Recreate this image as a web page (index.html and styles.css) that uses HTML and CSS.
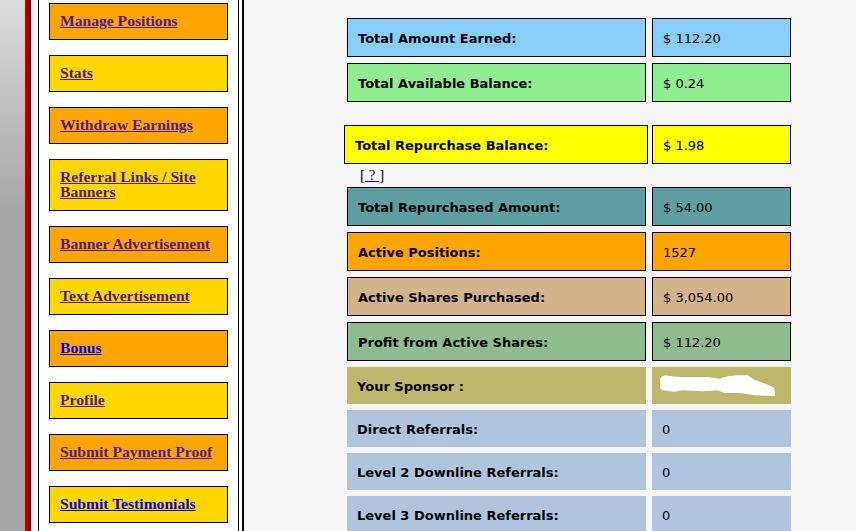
FILE: index.html
```html
<!DOCTYPE html>
<html>
<head>
<meta charset="utf-8">
<link rel="stylesheet" href="styles.css">
</head>
<body>
<div class="page">
  <div class="rail"></div>
  <div class="stripe"></div>
  <div class="pale"></div>
  <div class="side-outer">
    <div class="sidebar">
      <ul class="menu">
        <li class="item orange"><a class="visited" href="#">Manage Positions</a></li>
        <li class="item gold"><a class="visited" href="#">Stats</a></li>
        <li class="item orange"><a class="visited" href="#">Withdraw Earnings</a></li>
        <li class="item gold"><a class="visited" href="#">Referral Links / Site Banners</a></li>
        <li class="item orange"><a class="visited" href="#">Banner Advertisement</a></li>
        <li class="item gold"><a class="visited" href="#">Text Advertisement</a></li>
        <li class="item orange"><a class="fresh" href="#">Bonus</a></li>
        <li class="item gold"><a class="visited" href="#">Profile</a></li>
        <li class="item orange"><a class="visited" href="#">Submit Payment Proof</a></li>
        <li class="item gold"><a class="fresh" href="#">Submit Testimonials</a></li>
      </ul>
    </div>
  </div>
  <main class="main">
    <div class="grid grid-a">
      <div class="cell bordered sky label">Total Amount Earned:</div>
      <div class="cell bordered sky value">$ 112.20</div>
      <div class="cell bordered lgreen label">Total Available Balance:</div>
      <div class="cell bordered lgreen value">$ 0.24</div>
    </div>
    <div class="grid grid-b">
      <div class="cell bordered yellow label">Total Repurchase Balance:</div>
      <div class="cell bordered yellow value">$ 1.98</div>
    </div>
    <div class="help">[<a href="#" class="help-link">&nbsp;?&nbsp;</a>]</div>
    <div class="grid grid-a">
      <div class="cell bordered teal label">Total Repurchased Amount:</div>
      <div class="cell bordered teal value">$ 54.00</div>
      <div class="cell bordered orange label">Active Positions:</div>
      <div class="cell bordered orange value">1527</div>
      <div class="cell bordered tan label">Active Shares Purchased:</div>
      <div class="cell bordered tan value">$ 3,054.00</div>
      <div class="cell bordered seagreen label">Profit from Active Shares:</div>
      <div class="cell bordered seagreen value">$ 112.20</div>
      <div class="cell khaki label">Your Sponsor :</div>
      <div class="cell khaki value"><svg class="blob" width="120" height="25" viewBox="0 0 120 25"><path fill="#fff" d="M2 3 L6 1.3 L12 2.3 L22 3 L48.7 3 L60.3 4.7 L68.7 2.3 L78.7 1.3 L88.7 1.3 L95.3 5.7 L102 8 L110.3 11.3 L115.3 13.7 L116 22 L95.3 21.3 L82 19 L65.3 19 L58.7 16.3 L43.7 17.3 L23.7 16.3 L15.3 17.7 L3.7 16.3 L1.3 14.7 L1 4.7 Z"/></svg></div>
      <div class="cell steel label">Direct Referrals:</div>
      <div class="cell steel value">0</div>
      <div class="cell steel label">Level 2 Downline Referrals:</div>
      <div class="cell steel value">0</div>
      <div class="cell steel label">Level 3 Downline Referrals:</div>
      <div class="cell steel value">0</div>
    </div>
  </main>
</div>
</body>
</html>
```
FILE: styles.css
```css
html, body {
  margin: 0;
  padding: 0;
  height: 531px;
  overflow: hidden;
}
.page {
  display: flex;
  height: 531px;
  background: #f5f5f5;
}
.rail {
  width: 25px;
  flex: none;
  background: linear-gradient(to bottom, #dcdcdc 0px, #a6a6a6 210px, #a6a6a6 100%);
}
.stripe {
  width: 6px;
  flex: none;
  background: linear-gradient(to right, #c40000, #a00000 60%, #6a0000);
}
.pale {
  width: 3px;
  flex: none;
  background: #f2e4ea;
}
.side-outer {
  flex: none;
  background: #fff;
  padding-left: 4px;
  padding-right: 3px;
  border-right: 2px solid #000;
}
.sidebar {
  width: 179px;
  height: 100%;
  box-sizing: content-box;
  padding: 3px 10px 0 10px;
  border-left: 1px solid #000;
  border-right: 1px solid #000;
}
.menu {
  list-style: none;
  margin: 0;
  padding: 0;
  display: flex;
  flex-direction: column;
  gap: 15px;
}
.item {
  border: 1px solid #000;
  padding: 9px 10px 11px 10px;
  font-family: "Liberation Serif", "Times New Roman", serif;
  font-weight: bold;
  font-size: 15.6px;
  line-height: 15px;
}
.item.orange { background: #ffa500; }
.item.gold { background: #ffd700; }
.item a { text-decoration: underline; }
.item a.visited { color: #551a8b; }
.item a.fresh { color: #0000ee; }

.main {
  flex: 1;
  background: #f5f5f5;
  padding-top: 18px;
  padding-left: 100px;
  font-family: "DejaVu Sans", Verdana, sans-serif;
  font-size: 13px;
  color: #000;
}
.grid {
  display: grid;
  row-gap: 6px;
}
.grid-a {
  grid-template-columns: 299px 139px;
  column-gap: 6px;
  margin-left: 3px;
}
.grid-b {
  grid-template-columns: 304px 139px;
  column-gap: 4px;
  margin-top: 23px;
}
.cell {
  height: 37px;
  box-sizing: border-box;
  display: flex;
  align-items: center;
  padding: 1px 10px 0 10px;
  white-space: nowrap;
}
.cell.bordered {
  height: 39px;
  border: 1px solid #000;
}
.label { font-weight: bold; }
.value { font-weight: normal; }
.sky { background: #87cefa; }
.lgreen { background: #90ee90; }
.yellow { background: #ffff00; }
.teal { background: #5f9ea0; }
.orange { background: #ffa500; }
.tan { background: #d2b48c; }
.seagreen { background: #8fbc8f; }
.khaki { background: #bdb76b; }
.steel { background: #b0c4de; }
.blob { display: block; margin-left: -3px; }
.help {
  height: 23px;
  line-height: 23px;
  margin-left: 16px;
  font-family: "Liberation Serif", "Times New Roman", serif;
  font-size: 15px;
}
.help-link { color: #0000ee; text-decoration: underline; }
```
